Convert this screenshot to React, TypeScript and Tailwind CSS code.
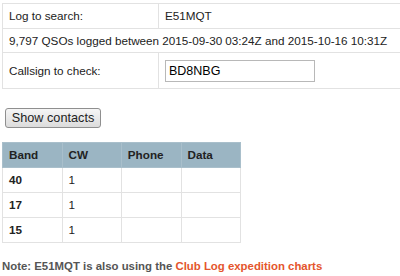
import React from 'react';

const bands = [
  { band: '40', cw: '1', phone: '', data: '' },
  { band: '17', cw: '1', phone: '', data: '' },
  { band: '15', cw: '1', phone: '', data: '' },
];

export default function App() {
  return (
    <div className="w-[400px] h-[276px] overflow-hidden bg-white text-[11.7px] leading-[14px] text-[#222] font-['Liberation_Sans',Arial,sans-serif]">
      {/* Search form */}
      <table className="ml-[2px] mt-[3px] w-[410px] border-collapse">
        <tbody>
          <tr className="h-[25px]">
            <td className="w-[156px] border border-[#e2e2e2] px-[6px]">Log to search:</td>
            <td className="border border-[#e2e2e2] px-[6px]">E51MQT</td>
          </tr>
          <tr className="h-[24px]">
            <td colSpan={2} className="whitespace-nowrap border border-[#e2e2e2] px-[6px]">
              9,797 QSOs logged between 2015-09-30 03:24Z and 2015-10-16 10:31Z
            </td>
          </tr>
          <tr className="h-[36px]">
            <td className="border border-[#e2e2e2] px-[6px]">Callsign to check:</td>
            <td className="border border-[#e2e2e2] px-[6px]">
              <input
                defaultValue="BD8NBG"
                className="block w-[150px] h-[22px] border border-[#b8b8b8] px-[3px] text-[12.5px] text-black outline-none"
              />
            </td>
          </tr>
        </tbody>
      </table>

      <button className="block ml-[5px] mt-[19px] h-[20px] w-[96px] rounded-[3px] border border-[#8f8f8f] bg-gradient-to-b from-[#f6f6f6] to-[#dcdcdc] text-[12.7px] text-[#222] leading-none">
        Show contacts
      </button>

      {/* Results */}
      <table className="ml-[2px] mt-[14px] w-[239px] border-collapse">
        <thead>
          <tr className="h-[25px] bg-[#9bb5c3] text-left">
            {['Band', 'CW', 'Phone', 'Data'].map((h) => (
              <th key={h} className="w-[60px] border border-[#a9bfcb] px-[6px] font-bold text-[#222]">
                {h}
              </th>
            ))}
          </tr>
        </thead>
        <tbody>
          {bands.map((r) => (
            <tr key={r.band} className="h-[25px]">
              <td className="border border-[#e2e2e2] px-[6px] font-bold">{r.band}</td>
              <td className="border border-[#e2e2e2] px-[6px]">{r.cw}</td>
              <td className="border border-[#e2e2e2] px-[6px]">{r.phone}</td>
              <td className="border border-[#e2e2e2] px-[6px]">{r.data}</td>
            </tr>
          ))}
        </tbody>
      </table>

      <p className="ml-[2px] mt-[16px] text-[11.4px] font-bold text-[#555]">
        Note: E51MQT is also using the <a className="text-[#e4552d]">Club Log expedition charts</a>
      </p>
    </div>
  );
}
